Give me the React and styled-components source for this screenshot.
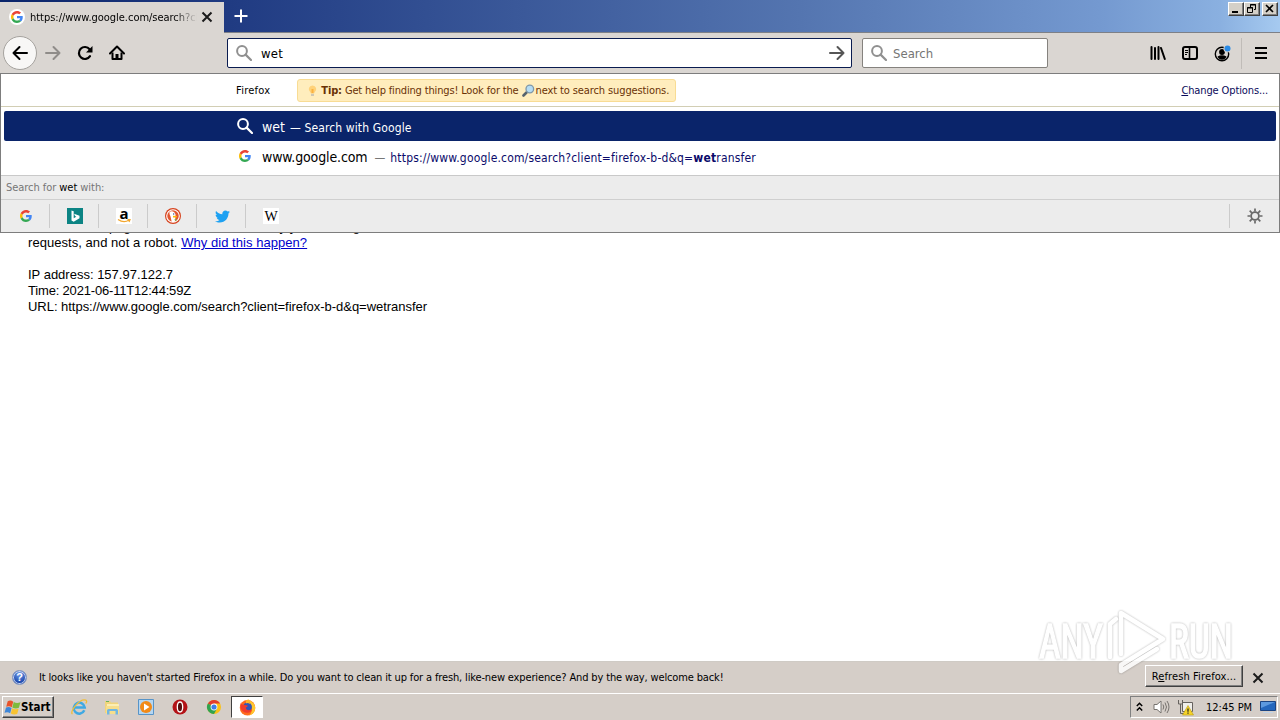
import React from "react";
import styled, { createGlobalStyle } from "styled-components";
import { FaTwitter } from "react-icons/fa";

const GlobalStyle = createGlobalStyle`
  * {
    box-sizing: border-box;
  }
  body {
    margin: 0;
    overflow: hidden;
  }
`;

const Screen = styled.div`
  width: 1280px;
  height: 720px;
  display: flex;
  flex-direction: column;
  overflow: hidden;
  background: #fff;
  color: #000;
  font-family: "DejaVu Sans Condensed", "DejaVu Sans", sans-serif;
  font-size: 11px;
  font-stretch: condensed;
  svg {
    display: block;
    flex-shrink: 0;
  }
`;

const Text = styled.span`
  display: block;
  white-space: nowrap;
  flex-shrink: 0;
  color: ${(props) => props.$color || "inherit"};
  font-size: ${(props) => props.$size || 11}px;
  letter-spacing: ${(props) => props.$spacing || 0}px;
  margin-left: ${(props) => props.$gap || 0}px;
  u {
    text-underline-offset: 1px;
  }
`;

/* title bar */

const TitleBar = styled.div`
  height: 33px;
  flex-shrink: 0;
  display: flex;
  border-top: 2px solid transparent;
  border-bottom: 1px solid #7d8087;
  background: linear-gradient(
      90deg,
      #0a246a 0,
      #213c83 240px,
      #5475b0 800px,
      #7499d0 1100px,
      #8ab0e0 1220px,
      #a6caf0 1280px
    )
    border-box;
`;

const Tab = styled.div`
  width: 224px;
  height: 31px;
  background: #dad6d2;
  display: flex;
  align-items: center;
  padding: 0 0 1px 9px;
`;

const TabIcon = styled.div`
  width: 16px;
  height: 16px;
  border-radius: 50%;
  background: #fff;
  display: flex;
  align-items: center;
  justify-content: center;
`;

const TabTitle = styled.div`
  width: 167px;
  margin: 0 4px 0 5px;
  overflow: hidden;
  mask-image: linear-gradient(90deg, #000 144px, transparent 167px);
`;

const NewTab = styled.div`
  padding: 7px 0 0 10px;
`;

const WindowButtons = styled.div`
  margin-left: auto;
  padding-right: 2px;
  display: flex;
`;

const WindowButton = styled.div`
  width: 16px;
  height: 14px;
  margin-left: ${(props) => props.$gap || 0}px;
  background: #d4d0c8;
  border: 1px solid;
  border-color: #fff #404040 #404040 #fff;
  box-shadow: inset -1px -1px 0 #808080;
`;

/* navigation toolbar */

const Toolbar = styled.div`
  height: 40px;
  flex-shrink: 0;
  display: flex;
  align-items: center;
  background: #dad6d2;
`;

const BackButton = styled.div`
  width: 34px;
  height: 34px;
  margin-left: 3px;
  border-radius: 50%;
  border: 1px solid #a5a29e;
  background: #f8f7f6;
  display: flex;
  align-items: center;
  justify-content: center;
`;

const ToolButton = styled.div`
  width: 32px;
  display: flex;
  justify-content: center;
`;

const Field = styled.div`
  width: ${(props) => props.$width}px;
  height: 30px;
  margin-left: ${(props) => props.$gap}px;
  padding: 0 6px 0 8px;
  border: 1px solid ${(props) => (props.$focused ? "#0a1c50" : "#85827e")};
  border-radius: 2px;
  background: #fff;
  display: flex;
  align-items: center;
`;

const Push = styled.div`
  margin-left: auto;
`;

const ToolGroup = styled.div`
  margin-left: auto;
  padding-right: 3px;
  display: flex;
  align-items: center;
`;

const ToolDivider = styled.div`
  width: 1px;
  height: 31px;
  margin: 0 3px;
  background: #c0bcb8;
`;

/* page and address bar popup */

const Content = styled.div`
  position: relative;
  flex: 1;
  background: #fff;
`;

const Page = styled.div`
  padding: 146px 0 0 28px;
  font-family: "Liberation Sans", Arial, sans-serif;
  color: #000;
  a {
    color: #0000cc;
    text-decoration: underline;
  }
`;

const PageLine = styled.div`
  height: 16px;
  line-height: 16px;
  font-size: 13px;
  white-space: pre;
  letter-spacing: ${(props) => props.$spacing || 0}px;
`;

const Popup = styled.div`
  position: absolute;
  top: 0;
  left: 0;
  width: 1280px;
  height: 160px;
  border: 1px solid #7d7d7d;
  background: #fff;
  display: flex;
  flex-direction: column;
`;

const TipRow = styled.div`
  height: 33px;
  padding: 0 11px 0 235px;
  border-bottom: 1px solid #d2ceb4;
  display: flex;
  align-items: center;
`;

const Tip = styled.div`
  width: 379px;
  height: 23px;
  margin-left: 27px;
  padding-left: 8px;
  display: flex;
  align-items: center;
  border: 1px solid #f8dc94;
  border-radius: 3px;
  background: #ffedbd;
  color: #6a3206;
`;

const Results = styled.div`
  height: 68px;
  padding: 4px 3px 0;
`;

const Result = styled.div`
  height: 30px;
  padding-left: 233px;
  border-radius: 2px;
  display: flex;
  align-items: center;
  background: ${(props) => (props.$selected ? "#0a246a" : "transparent")};
  color: ${(props) => (props.$selected ? "#fff" : "#000")};
`;

const ResultIcon = styled.div`
  width: 16px;
  margin-right: 8px;
  display: flex;
  justify-content: center;
`;

const ResultText = styled.div`
  display: flex;
  align-items: baseline;
  padding-top: 2px;
`;

const EngineHeader = styled.div`
  height: 24px;
  padding-left: 5px;
  display: flex;
  align-items: center;
  background: #ececec;
  border-top: 1px solid #c9c9c9;
  color: #767676;
  b {
    font-weight: normal;
    color: #000;
  }
`;

const Engines = styled.div`
  flex: 1;
  display: flex;
  align-items: center;
  background: #ececec;
  border-top: 1px solid #cfcfcf;
`;

const Engine = styled.div`
  width: 49px;
  height: 24px;
  padding-left: 2px;
  display: flex;
  align-items: center;
  justify-content: center;
  border-right: 1px solid ${(props) => (props.$last ? "transparent" : "#cbcbcb")};
`;

const WikiLetter = styled.div`
  width: 16px;
  height: 16px;
  background: #fff;
  font: 14px/17px "Liberation Serif", serif;
  display: flex;
  justify-content: center;
`;

const AmazonLetter = styled.div`
  width: 16px;
  height: 16px;
  background: #fff;
  font: bold 15px/10px "Open Sans", sans-serif;
  display: flex;
  flex-direction: column;
  align-items: center;
  gap: 1px;
`;

const EngineSettings = styled.div`
  width: 50px;
  height: 24px;
  margin-left: auto;
  border-left: 1px solid #cbcbcb;
  display: flex;
  align-items: center;
  justify-content: center;
`;

/* watermark */

const Watermark = styled.svg`
  position: absolute;
  left: 1030px;
  top: 604px;
  filter: drop-shadow(0 0 1px rgba(0, 0, 0, 0.35));
  opacity: 0.85;
`;

/* notification bar */

const Notification = styled.div`
  height: 32px;
  flex-shrink: 0;
  display: flex;
  align-items: center;
  padding: 0 16px 0 12px;
  background: #d5cec8;
  border-top: 1px solid #cfcbc5;
`;

const HelpBadge = styled.div`
  width: 15px;
  height: 15px;
  margin-right: 12px;
  border-radius: 50%;
  border: 1px solid #7d93bf;
  background: radial-gradient(circle at 50% 25%, #6f9bea, #1642a8 75%);
  box-shadow: inset 0 0 0 1px #c8d6f2;
  color: #fff;
  font: bold 11px/13px "Liberation Sans", sans-serif;
  text-align: center;
`;

const RefreshButton = styled.div`
  width: 98px;
  height: 22px;
  margin: 0 9px 3px auto;
  display: flex;
  align-items: center;
  justify-content: center;
  background: #d5cec8;
  border: 1px solid;
  border-color: #fff #404040 #404040 #fff;
  box-shadow: inset -1px -1px 0 #808080;
`;

/* taskbar */

const Taskbar = styled.div`
  height: 27px;
  flex-shrink: 0;
  display: flex;
  align-items: center;
  padding: 0 2px;
  background: #d5cec8;
  border-top: 1px solid #fff;
`;

const StartButton = styled.div`
  width: 52px;
  height: 22px;
  margin-right: 9px;
  padding-left: 1px;
  display: flex;
  align-items: center;
  border: 1px solid;
  border-color: #fff #404040 #404040 #fff;
  box-shadow: inset -1px -1px 0 #808080;
  font-weight: bold;
`;

const TaskIcon = styled.div`
  width: 32px;
  height: 22px;
  margin-right: 1.7px;
  display: flex;
  align-items: center;
  justify-content: center;
  border: 1px solid;
  border-color: ${(props) =>
    props.$active ? "#404040 #fff #fff #404040" : "transparent"};
  background: ${(props) => (props.$active ? "#fff" : "transparent")};
`;

const Tray = styled.div`
  width: 148px;
  height: 22px;
  margin-left: auto;
  padding: 0 1px 0 5px;
  display: flex;
  align-items: center;
  border: 1px solid;
  border-color: #808080 #fff #fff #808080;
`;

const TraySlot = styled.div`
  margin-left: ${(props) => props.$gap || 0}px;
`;

const GoogleIcon = ({ size = 12 }) => (
  <svg width={size} height={size} viewBox="0 0 48 48">
    <path
      fill="#EA4335"
      d="M24 9.500c3.540 0 6.710 1.220 9.210 3.600l6.850-6.850C35.900 2.380 30.470 0 24 0 14.620 0 6.510 5.380 2.560 13.220l7.980 6.190C12.430 13.720 17.740 9.500 24 9.500z"
    />
    <path
      fill="#4285F4"
      d="M46.980 24.550c0-1.570-.15-3.090-.38-4.550H24v9.020h12.940c-.58 2.960-2.260 5.480-4.780 7.180l7.730 6c4.510-4.180 7.090-10.360 7.090-17.650z"
    />
    <path
      fill="#FBBC05"
      d="M10.530 28.590c-.48-1.450-.76-2.990-.76-4.590s.27-3.140.76-4.590l-7.980-6.190C.92 16.460 0 20.120 0 24c0 3.880.92 7.540 2.560 10.780l7.970-6.190z"
    />
    <path
      fill="#34A853"
      d="M24 48c6.480 0 11.930-2.130 15.890-5.810l-7.730-6c-2.150 1.450-4.920 2.300-8.160 2.300-6.260 0-11.570-4.220-13.470-9.910l-7.980 6.190C6.510 42.620 14.620 48 24 48z"
    />
  </svg>
);

const SearchIcon = ({ color }) => (
  <svg width="16" height="16" viewBox="0 0 16 16" fill="none" stroke={color}>
    <circle cx="6" cy="6" r="4.9" strokeWidth="2" />
    <path d="M9.6 9.6l5.4 5.4" strokeWidth="2.2" strokeLinecap="round" />
  </svg>
);

const ArrowIcon = ({ color, flip, size = 16 }) => (
  <svg
    width={size}
    height={size}
    viewBox="0 0 16 16"
    fill="none"
    stroke={color}
    strokeWidth="2"
    strokeLinecap="round"
    strokeLinejoin="round"
  >
    <path d={flip ? "M15 8H1.5M7.5 2l-6 6 6 6" : "M1 8h13.5M8.500 2l6 6-6 6"} />
  </svg>
);

const CloseIcon = () => (
  <svg width="12" height="12" viewBox="0 0 12 12" stroke="#1b1b1b">
    <path d="M1.500 1.500l9 9M10.500 1.500l-9 9" strokeWidth="2" />
  </svg>
);

const ReloadIcon = () => (
  <svg width="16" height="16" viewBox="0 0 16 16" fill="none" stroke="#000">
    <path d="M13 11.200A6 6 0 1 1 12.600 4.200" strokeWidth="2.200" strokeLinecap="round" />
    <path d="M15.500 1v6.500H9z" fill="#000" stroke="none" />
  </svg>
);

const HomeIcon = () => (
  <svg width="16" height="16" viewBox="0 0 16 16" fill="none" stroke="#000">
    <path d="M1 8.500l7-7 7 7" strokeWidth="2" strokeLinecap="round" strokeLinejoin="round" />
    <path d="M3.500 7.500v6.500h9V7.500" strokeWidth="2" strokeLinejoin="round" />
    <path d="M6.500 14V9h3v5z" fill="#000" stroke="none" />
  </svg>
);

const LibraryIcon = () => (
  <svg width="16" height="16" viewBox="0 0 16 16" stroke="#000" strokeWidth="2" strokeLinecap="round">
    <path d="M1.500 2v12M5 3v11M8.500 2v12M11 3l3.800 11" />
  </svg>
);

const SidebarIcon = () => (
  <svg width="16" height="16" viewBox="0 0 16 16" fill="none" stroke="#000">
    <rect x="1" y="2" width="14" height="12" rx="2" strokeWidth="2" />
    <path d="M7.500 2v12" strokeWidth="1.600" />
    <path d="M3 5.500h3M3 7.500h3M3 9.500h2" />
  </svg>
);

const AccountIcon = () => (
  <svg width="17" height="17" viewBox="0 0 17 17">
    <circle cx="8" cy="9" r="6.700" fill="none" stroke="#000" strokeWidth="1.400" />
    <circle cx="8" cy="7" r="2.900" />
    <path d="M3.500 11.500q4.500-2.500 9 0-1.500 3.300-4.500 3.300t-4.500-3.300z" />
    <circle cx="13.500" cy="3.500" r="4" fill="#dad6d2" />
    <circle cx="13.500" cy="3.500" r="3" fill="#2a8be6" />
  </svg>
);

const BulbIcon = () => (
  <svg width="13" height="13" viewBox="0 0 13 13">
    <path d="M6.500 1.500a3.700 3.700 0 0 1 2.200 6.700L8 9.500H5L4.300 8.200A3.700 3.700 0 0 1 6.500 1.500z" fill="#ffd27a" />
    <path d="M5.500 5h2v4h-2z" fill="#fbb13e" />
    <path d="M5 9.800h3V12H5z" fill="#cfc8b4" />
  </svg>
);

const LensIcon = () => (
  <svg width="13" height="13" viewBox="0 0 13 13">
    <path d="M4.500 8.500l-3 3" stroke="#56636d" strokeWidth="2.600" strokeLinecap="round" />
    <circle cx="7.800" cy="5" r="3.800" fill="#b5dcf3" stroke="#7e97a8" strokeWidth="1.300" />
  </svg>
);

const BingIcon = () => (
  <svg width="16" height="16" viewBox="0 0 16 16">
    <path d="M0 0h16v16H0z" fill="#0c8484" />
    <path d="M4.500 2.500l2.200.7v7l2.600-1.500-1.300-.7-.9-2.200 5.400 1.900v2.600L6.700 13.800l-2.200-1.300z" fill="#fff" />
  </svg>
);

const DuckIcon = () => (
  <svg width="16" height="16" viewBox="0 0 16 16">
    <circle cx="8" cy="8" r="8" fill="#d6421d" />
    <circle cx="8" cy="8" r="6.300" fill="#e2562f" stroke="#fff" strokeWidth="1.100" />
    <path d="M4.500 4Q7 2.500 9.500 4.500q1.500 1.500 1 4L10 13.500q-2 .9-3.300.3L5.500 8.500Q4 6 4.500 4z" fill="#fff" />
    <path d="M8 7.800l4.200.2-.7 1.500-3.500.1z" fill="#fdb90a" />
    <path d="M9 11.800l2.300-.8v2z" fill="#67bd47" />
    <circle cx="8.700" cy="6" r=".7" fill="#2d4f8e" />
  </svg>
);

const GearIcon = () => (
  <svg width="16" height="16" viewBox="0 0 16 16" fill="none" stroke="#6a6a6a">
    <circle cx="8" cy="8" r="3.900" strokeWidth="1.800" />
    <path
      d="M8 .5v3M8 12.500v3M.5 8h3M12.500 8h3M2.700 2.700l2.100 2.100M11.200 11.200l2.100 2.100M2.700 13.300l2.100-2.100M11.200 4.800l2.100-2.100"
      strokeWidth="1.700"
    />
  </svg>
);

const WindowsFlag = () => (
  <svg width="17" height="17" viewBox="0 0 16 16">
    <path d="M3.500 2.200q2.500-1.700 5.200.3L7.300 7.700q-2.500-1.600-5.200-.4z" fill="#e8532a" />
    <path d="M9.200 2.900q2.700 1.500 6.300.2l-1.500 5.200q-3.200 1.200-6.200-.3z" fill="#7dba3c" />
    <path d="M1.900 8q2.700-1.200 5.200.4L5.800 13.300Q3.300 11.700.5 12.900z" fill="#3d86d8" />
    <path d="M7.700 8.800q2.800 1.400 6.100.4L12.400 14.200q-3.300 1-6-.5z" fill="#f8c332" />
  </svg>
);

const ExplorerIcon = () => (
  <svg width="18" height="18" viewBox="0 0 18 18" fill="none">
    <path d="M14.300 12.300A5.500 5.500 0 1 1 14.700 9.500H5" stroke="#3fa9e3" strokeWidth="2.500" />
    <path d="M2.500 16C-1 14 10-.5 16 2.200c1 .6.700 2-.2 3.300" stroke="#f0bd38" strokeWidth="1.300" />
  </svg>
);

const FolderIcon = () => (
  <svg width="17" height="17" viewBox="0 0 17 17">
    <path d="M1 2h5l1 1.500h7V14H1z" fill="#f0d47c" />
    <path d="M3 5h12v5H3z" fill="#fbeeb4" />
    <path d="M2 7h13v8H2z" fill="#f6de8c" />
    <path d="M3 15.500v-4q0-1.500 1.500-1.500h8q1.500 0 1.500 1.500v4h-2.500V12h-6v3.500z" fill="#70b6e3" />
    <path d="M2 2.500h3" stroke="#6bb35c" />
  </svg>
);

const MediaIcon = () => (
  <svg width="16" height="16" viewBox="0 0 16 16">
    <path d="M.5.5h15v15H.5z" fill="#b5d6f1" stroke="#5794c8" />
    <circle cx="8" cy="8" r="6" fill="#f28a17" />
    <path d="M6 4.500l5.500 3.500L6 11.500z" fill="#fff" />
  </svg>
);

const OperaIcon = () => (
  <svg width="16" height="16" viewBox="0 0 16 16">
    <circle cx="8" cy="8" r="7.500" fill="#b31217" />
    <ellipse cx="8" cy="8" rx="2.700" ry="5" fill="#551011" stroke="#fff" strokeWidth="1.300" />
  </svg>
);

const ChromeIcon = () => (
  <svg width="16" height="16" viewBox="0 0 16 16">
    <circle cx="8" cy="8" r="7" fill="#fbc116" />
    <path d="M8 8L1.900 4.500A7 7 0 0 1 14.100 4.500H8z" fill="#e33b2e" />
    <path d="M8 8L1.900 4.500A7 7 0 0 0 8 15l3-5.200z" fill="#31a350" />
    <circle cx="8" cy="8" r="3.400" fill="#fff" />
    <circle cx="8" cy="8" r="2.600" fill="#3f7fe8" />
  </svg>
);

const FirefoxIcon = () => (
  <svg width="17" height="17" viewBox="0 0 16 16">
    <circle cx="8" cy="8.200" r="7.300" fill="#ff6a1c" />
    <path d="M9 1q6.500 2.500 6.300 8-.6 6-6.300 6.500 5-3.500 2.500-8.500z" fill="#ffc72e" />
    <circle cx="8" cy="7.500" r="4.200" fill="#3154b8" />
    <path d="M1.500 3.500q.5 2 2.500 2l4 .5q.5 1.500-1.500 2 0 2.500 3 2.500 2 0 2.500-1-.5 4-5 3.500-4.500-.7-5.500-5z" fill="#ef3b2d" />
    <path d="M6.500 1.500Q9 0 9.500.7 9 3 11 5 7.500 3 6.500 4.200z" fill="#ffb527" />
  </svg>
);

const SpeakerIcon = () => (
  <svg width="17" height="16" viewBox="0 0 17 16" fill="none" stroke="#77736f">
    <path d="M1 5.500h3L8 2v12l-4-3.500H1z" fill="#fff" />
    <path d="M10 5.500q1.500 2.500 0 5M12 3.500q3 4.500 0 9M14 2q4 6 0 12" />
  </svg>
);

const NetworkIcon = () => (
  <svg width="17" height="17" viewBox="0 0 17 17">
    <path d="M5.500 3.500h10v9h-10z" fill="#f0efeb" stroke="#66625e" />
    <path d="M1.500 1v4h4V1M3.500 5v9.500h6" fill="none" stroke="#66625e" />
    <path d="M11 6.500l5.500 9.500h-11z" fill="#f6d327" stroke="#b89b12" strokeWidth=".6" />
    <path d="M11 9.500v3.300M11 13.500v1.300" stroke="#222" strokeWidth="1.200" />
  </svg>
);

const MonitorIcon = () => (
  <svg width="16" height="14" viewBox="0 0 16 14">
    <path d="M.5 1.500h15v9H.5z" fill="#2467bd" stroke="#1b4482" />
    <path d="M1 2h14L1 8z" fill="#5c99df" />
    <path d="M3 12.500h10" stroke="#c2d4e8" />
  </svg>
);

const taskIcons = [ExplorerIcon, FolderIcon, MediaIcon, OperaIcon, ChromeIcon];

function AnyRunMark() {
  return (
    <Watermark width="230" height="76" viewBox="0 0 230 76">
      <g
        fill="#fff"
        stroke="#fff"
        strokeWidth="1.5"
        fontFamily="Roboto, sans-serif"
        fontSize="49"
      >
        <text x="9" y="54" textLength="64" lengthAdjust="spacingAndGlyphs">
          ANY
        </text>
        <text x="139" y="54" textLength="64" lengthAdjust="spacingAndGlyphs">
          RUN
        </text>
      </g>
      <path
        d="M80 53V20l6-5M91 50V9l42 26-42 26v6l36-22"
        fill="none"
        stroke="#fff"
        strokeWidth="4.500"
        strokeLinejoin="round"
        strokeLinecap="round"
      />
    </Watermark>
  );
}

function App() {
  return (
    <Screen>
      <GlobalStyle />
      <TitleBar>
        <Tab>
          <TabIcon>
            <GoogleIcon />
          </TabIcon>
          <TabTitle>
            <Text $spacing={-0.03}>https://www.google.com/search?client</Text>
          </TabTitle>
          <CloseIcon />
        </Tab>
        <NewTab>
          <svg width="14" height="14" viewBox="0 0 14 14" stroke="#fff">
            <path d="M7 .5v13M.5 7h13" strokeWidth="2" />
          </svg>
        </NewTab>
        <WindowButtons>
          <WindowButton>
            <svg width="13" height="12" viewBox="0 0 13 12">
              <path d="M3 8h6v2H3z" />
            </svg>
          </WindowButton>
          <WindowButton>
            <svg width="13" height="12" viewBox="0 0 13 12" fill="none" stroke="#000">
              <path d="M5.500 4V1.500h5v5H9M5 2h6M2.500 4.500h5v5h-5zM2 5h6" />
            </svg>
          </WindowButton>
          <WindowButton $gap={2}>
            <svg width="13" height="12" viewBox="0 0 13 12" stroke="#000">
              <path d="M3 2l7 7M10 2L3 9" strokeWidth="1.600" />
            </svg>
          </WindowButton>
        </WindowButtons>
      </TitleBar>

      <Toolbar>
        <BackButton>
          <ArrowIcon color="#000" flip />
        </BackButton>
        <ToolButton>
          <ArrowIcon color="#8f8c89" />
        </ToolButton>
        <ToolButton>
          <ReloadIcon />
        </ToolButton>
        <ToolButton>
          <HomeIcon />
        </ToolButton>
        <Field $width={625} $gap={94} $focused>
          <SearchIcon color="#909090" />
          <Text $size={13} $gap={9} $spacing={0.2}>
            wet
          </Text>
          <Push>
            <ArrowIcon color="#555" />
          </Push>
        </Field>
        <Field $width={186} $gap={10}>
          <SearchIcon color="#909090" />
          <Text $size={13} $color="#757575" $gap={6}>
            Search
          </Text>
        </Field>
        <ToolGroup>
          <ToolButton>
            <LibraryIcon />
          </ToolButton>
          <ToolButton>
            <SidebarIcon />
          </ToolButton>
          <ToolButton>
            <AccountIcon />
          </ToolButton>
          <ToolDivider />
          <ToolButton>
            <svg width="14" height="14" viewBox="0 0 14 14" stroke="#000">
              <path d="M1 2h12M1 7h12M1 12h12" strokeWidth="2" />
            </svg>
          </ToolButton>
        </ToolGroup>
      </Toolbar>

      <Content>
        <Page>
          <PageLine $spacing={0.03}>
            network. This page checks to see if it's really you sending the
          </PageLine>
          <PageLine $spacing={0.05}>
            requests, and not a robot. <a>Why did this happen?</a>
          </PageLine>
          <PageLine />
          <PageLine>IP address: 157.97.122.7</PageLine>
          <PageLine $spacing={-0.18}>Time: 2021-06-11T12:44:59Z</PageLine>
          <PageLine $spacing={-0.03}>
            URL: https://www.google.com/search?client=firefox-b-d&amp;q=wetransfer
          </PageLine>
        </Page>
        <Popup>
          <TipRow>
            <Text $spacing={0.25}>Firefox</Text>
            <Tip>
              <BulbIcon />
              <Text $gap={2} $spacing={-0.16}>
                <b>Tip:</b> Get help finding things! Look for the
              </Text>
              <Text $gap={3}>
                <LensIcon />
              </Text>
              <Text $gap={1} $spacing={-0.11}>
                next to search suggestions.
              </Text>
            </Tip>
            <Push>
              <Text $color="#0a0a5a" $spacing={-0.12}>
                <u>C</u>hange Options...
              </Text>
            </Push>
          </TipRow>
          <Results>
            <Result $selected>
              <ResultIcon>
                <SearchIcon color="#fff" />
              </ResultIcon>
              <ResultText>
                <Text $size={14} $gap={1}>
                  wet
                </Text>
                <Text $size={12} $gap={5} $spacing={0.12}>
                  — Search with Google
                </Text>
              </ResultText>
            </Result>
            <Result>
              <ResultIcon>
                <GoogleIcon />
              </ResultIcon>
              <ResultText>
                <Text $size={14} $gap={1} $spacing={-0.12}>
                  www.google.com
                </Text>
                <Text $size={12} $color="#777" $gap={7}>
                  —
                </Text>
                <Text $size={12} $color="#0a0a6a" $gap={5} $spacing={0.17}>
                  https://www.google.com/search?client=firefox-b-d&amp;q=<b>wet</b>ransfer
                </Text>
              </ResultText>
            </Result>
          </Results>
          <EngineHeader>
            <Text $spacing={-0.05}>
              Search for <b>wet</b> with:
            </Text>
          </EngineHeader>
          <Engines>
            <Engine>
              <GoogleIcon />
            </Engine>
            <Engine>
              <BingIcon />
            </Engine>
            <Engine>
              <AmazonLetter>
                a
                <svg width="14" height="4" viewBox="0 0 14 4" fill="none" stroke="#f3a72f">
                  <path d="M1 .5q6 4 11 .5M10.500.5h2.500L12 3" strokeWidth="1.300" />
                </svg>
              </AmazonLetter>
            </Engine>
            <Engine>
              <DuckIcon />
            </Engine>
            <Engine>
              <FaTwitter size={15} color="#1da1f2" />
            </Engine>
            <Engine $last>
              <WikiLetter>W</WikiLetter>
            </Engine>
            <EngineSettings>
              <GearIcon />
            </EngineSettings>
          </Engines>
        </Popup>
      </Content>

      <Notification>
        <HelpBadge>?</HelpBadge>
        <Text $spacing={-0.142}>
          It looks like you haven't started Firefox in a while. Do you want to clean it up for a
          fresh, like-new experience? And by the way, welcome back!
        </Text>
        <RefreshButton>
          <Text $spacing={0.12}>
            R<u>e</u>fresh Firefox...
          </Text>
        </RefreshButton>
        <CloseIcon />
      </Notification>

      <Taskbar>
        <StartButton>
          <WindowsFlag />
          <Text $size={11.5}>Start</Text>
        </StartButton>
        {taskIcons.map((Icon, i) => (
          <TaskIcon key={i}>
            <Icon />
          </TaskIcon>
        ))}
        <TaskIcon $active>
          <FirefoxIcon />
        </TaskIcon>
        <Tray>
          <svg width="7" height="10" viewBox="0 0 7 10" fill="none" stroke="#000">
            <path d="M.8 4l2.700-2.700L6.200 4M.8 8.500l2.700-2.700 2.700 2.700" strokeWidth="1.500" />
          </svg>
          <TraySlot $gap={10}>
            <SpeakerIcon />
          </TraySlot>
          <TraySlot $gap={7}>
            <NetworkIcon />
          </TraySlot>
          <TraySlot $gap={12}>
            <Text>12:45 PM</Text>
          </TraySlot>
          <Push>
            <MonitorIcon />
          </Push>
        </Tray>
      </Taskbar>
      <AnyRunMark />
    </Screen>
  );
}

export default App;
